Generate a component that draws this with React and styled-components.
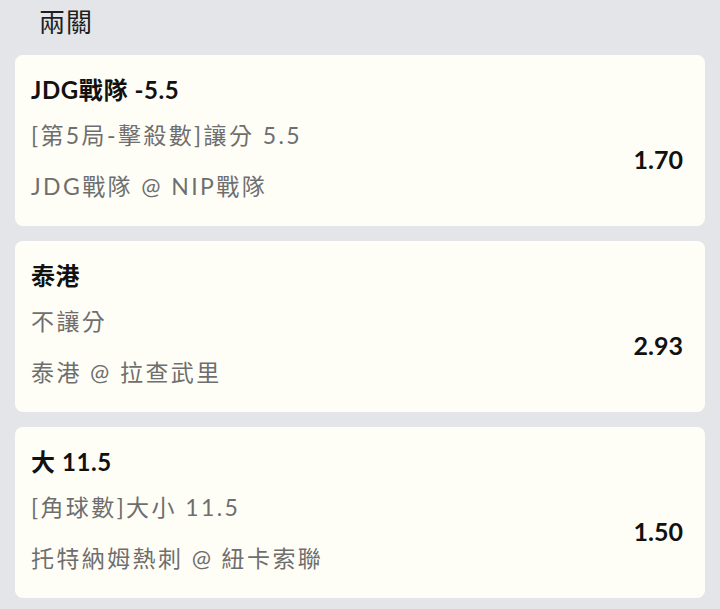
import React from "react";
import styled, { createGlobalStyle } from "styled-components";

const bets = [
  {
    pick: "JDG戰隊 -5.5",
    market: "[第5局-擊殺數]讓分 5.5",
    match: "JDG戰隊 @ NIP戰隊",
    odds: "1.70",
  },
  {
    pick: "泰港",
    market: "不讓分",
    match: "泰港 @ 拉查武里",
    odds: "2.93",
  },
  {
    pick: "大 11.5",
    market: "[角球數]大小 11.5",
    match: "托特納姆熱刺 @ 紐卡索聯",
    odds: "1.50",
  },
];

const App = () => {
  return (
    <>
      <GlobalStyle />
      <Page>
        <Heading>兩關</Heading>
        <List>
          {bets.map((bet) => (
            <Card key={bet.pick}>
              <Pick>{bet.pick}</Pick>
              <Body>
                <Info>
                  <Line>{bet.market}</Line>
                  <Line>{bet.match}</Line>
                </Info>
                <Odds>{bet.odds}</Odds>
              </Body>
            </Card>
          ))}
        </List>
      </Page>
    </>
  );
};

export default App;

// 스타일링
const GlobalStyle = createGlobalStyle`
  html, body {
    margin: 0;
    padding: 0;
    background: #e4e5e9;
  }
  body {
    font-family: Lato, "Noto Sans CJK TC", sans-serif;
  }
`;

const Page = styled.div`
  width: 720px;
  height: 609px;
  overflow: hidden;
  background: #e4e5e9;
`;

const Heading = styled.div`
  padding: 3px 0 0 39px;
  height: 51px;
  box-sizing: border-box;
  font-family: "Noto Sans CJK TC", sans-serif;
  font-size: 26px;
  line-height: 36px;
  letter-spacing: 1px;
  color: #1e1e1e;
`;

const List = styled.div`
  display: flex;
  flex-direction: column;
  gap: 15px;
  padding: 4px 15px 0 15px;
`;

const Card = styled.div`
  height: 171px;
  box-sizing: border-box;
  background: #fffef6;
  border-radius: 8px;
  padding: 20px 22px 0 16px;
`;

const Pick = styled.div`
  font-size: 24px;
  font-weight: 700;
  line-height: 30px;
  letter-spacing: 0.6px;
  color: #111;
`;

const Body = styled.div`
  display: flex;
  align-items: center;
  justify-content: space-between;
  margin-top: 15px;
`;

const Info = styled.div`
  display: flex;
  flex-direction: column;
  gap: 21px;
`;

const Line = styled.div`
  font-size: 23px;
  line-height: 30px;
  letter-spacing: 2.4px;
  color: #6e6e6e;
`;

const Odds = styled.div`
  font-size: 25px;
  font-weight: 700;
  line-height: 30px;
  padding-bottom: 4px;
  color: #111;
`;
